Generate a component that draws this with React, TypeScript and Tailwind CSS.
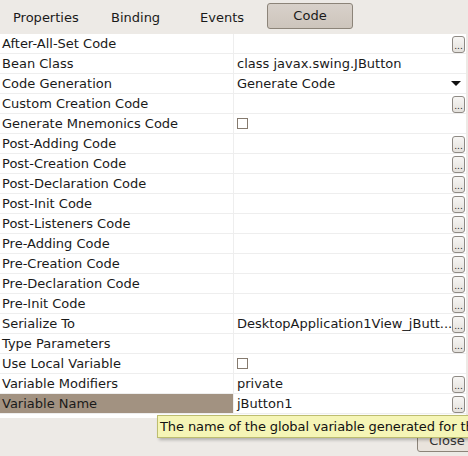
import React from "react";

type Row = {
  label: string;
  value?: string;
  kind?: "btn" | "check" | "combo" | "none";
};

const rows: Row[] = [
  { label: "After-All-Set Code", kind: "btn" },
  { label: "Bean Class", value: "class javax.swing.JButton", kind: "none" },
  { label: "Code Generation", value: "Generate Code", kind: "combo" },
  { label: "Custom Creation Code", kind: "btn" },
  { label: "Generate Mnemonics Code", kind: "check" },
  { label: "Post-Adding Code", kind: "btn" },
  { label: "Post-Creation Code", kind: "btn" },
  { label: "Post-Declaration Code", kind: "btn" },
  { label: "Post-Init Code", kind: "btn" },
  { label: "Post-Listeners Code", kind: "btn" },
  { label: "Pre-Adding Code", kind: "btn" },
  { label: "Pre-Creation Code", kind: "btn" },
  { label: "Pre-Declaration Code", kind: "btn" },
  { label: "Pre-Init Code", kind: "btn" },
  { label: "Serialize To", value: "DesktopApplication1View_jButt...", kind: "btn" },
  { label: "Type Parameters", kind: "btn" },
  { label: "Use Local Variable", kind: "check" },
  { label: "Variable Modifiers", value: "private", kind: "btn" },
  { label: "Variable Name", value: "jButton1", kind: "btn" },
];

function EllipsisButton() {
  return (
    <div className="absolute right-[1px] top-[2px] flex h-[17px] w-[13px] items-end justify-center rounded-[3px] border border-[#8f8a84] bg-gradient-to-b from-[#f7f6f4] to-[#e4e1dc] pb-[1px] text-[9px] leading-[9px] text-[#222]">
      ...
    </div>
  );
}

export default function App() {
  return (
    <div
      className="relative h-[456px] w-[468px] overflow-hidden bg-[#edeae6] text-[13px] text-[#1a1a1a]"
      style={{ fontFamily: '"DejaVu Sans", "Liberation Sans", sans-serif' }}
    >
      {/* tab strip */}
      <div className="flex h-[34px] items-start pt-[3px]">
        <div className="ml-[13px] mt-[5px] w-[98px]">Properties</div>
        <div className="mt-[5px] w-[89px]">Binding</div>
        <div className="mt-[5px] w-[67px]">Events</div>
        <div className="flex h-[26px] w-[86px] items-center justify-center rounded-[3px] border border-[#8c8479] bg-gradient-to-b from-[#d8d1ca] to-[#cdc5bc]">
          Code
        </div>
      </div>

      {/* property sheet */}
      <div className="mr-[2px] bg-white pb-[4px]">
        {rows.map((r, i) => {
          const selected = i === rows.length - 1;
          return (
            <div key={r.label} className="flex h-[20px] border-b border-[#eeeeee]">
              <div
                className={
                  "w-[234px] shrink-0 border-r border-[#eeeeee] pl-[2px] leading-[19px] " +
                  (selected ? "bg-[#a29281]" : "")
                }
              >
                {r.label}
              </div>
              <div className="relative flex-1 pl-[3px] leading-[19px]">
                {r.value}
                {r.kind === "btn" && <EllipsisButton />}
                {r.kind === "check" && (
                  <div className="absolute left-[3px] top-[4px] h-[11px] w-[11px] border border-[#857a6e] bg-white" />
                )}
                {r.kind === "combo" && (
                  <svg className="absolute right-[5px] top-[7px]" width="10" height="5" viewBox="0 0 10 5">
                    <polygon points="0,0 10,0 5,5" fill="#111" />
                  </svg>
                )}
              </div>
            </div>
          );
        })}
      </div>

      {/* close button, partly hidden */}
      <div className="absolute left-[417px] top-[430px] flex h-[22px] w-[60px] items-center justify-center rounded-[3px] border border-[#8c8479] bg-[#e9e3dc] text-[#333]">
        Close
      </div>

      {/* tooltip */}
      <div className="absolute left-[157px] top-[415px] h-[23px] w-[311px] overflow-hidden whitespace-nowrap border border-r-0 border-[#bdbd70] bg-[#f5f5b6] pl-[2px] leading-[21px] tracking-[-0.1px] text-[#111] shadow-[2px_2px_3px_rgba(0,0,0,0.25)]">
        The name of the global variable generated for this component
      </div>
    </div>
  );
}
